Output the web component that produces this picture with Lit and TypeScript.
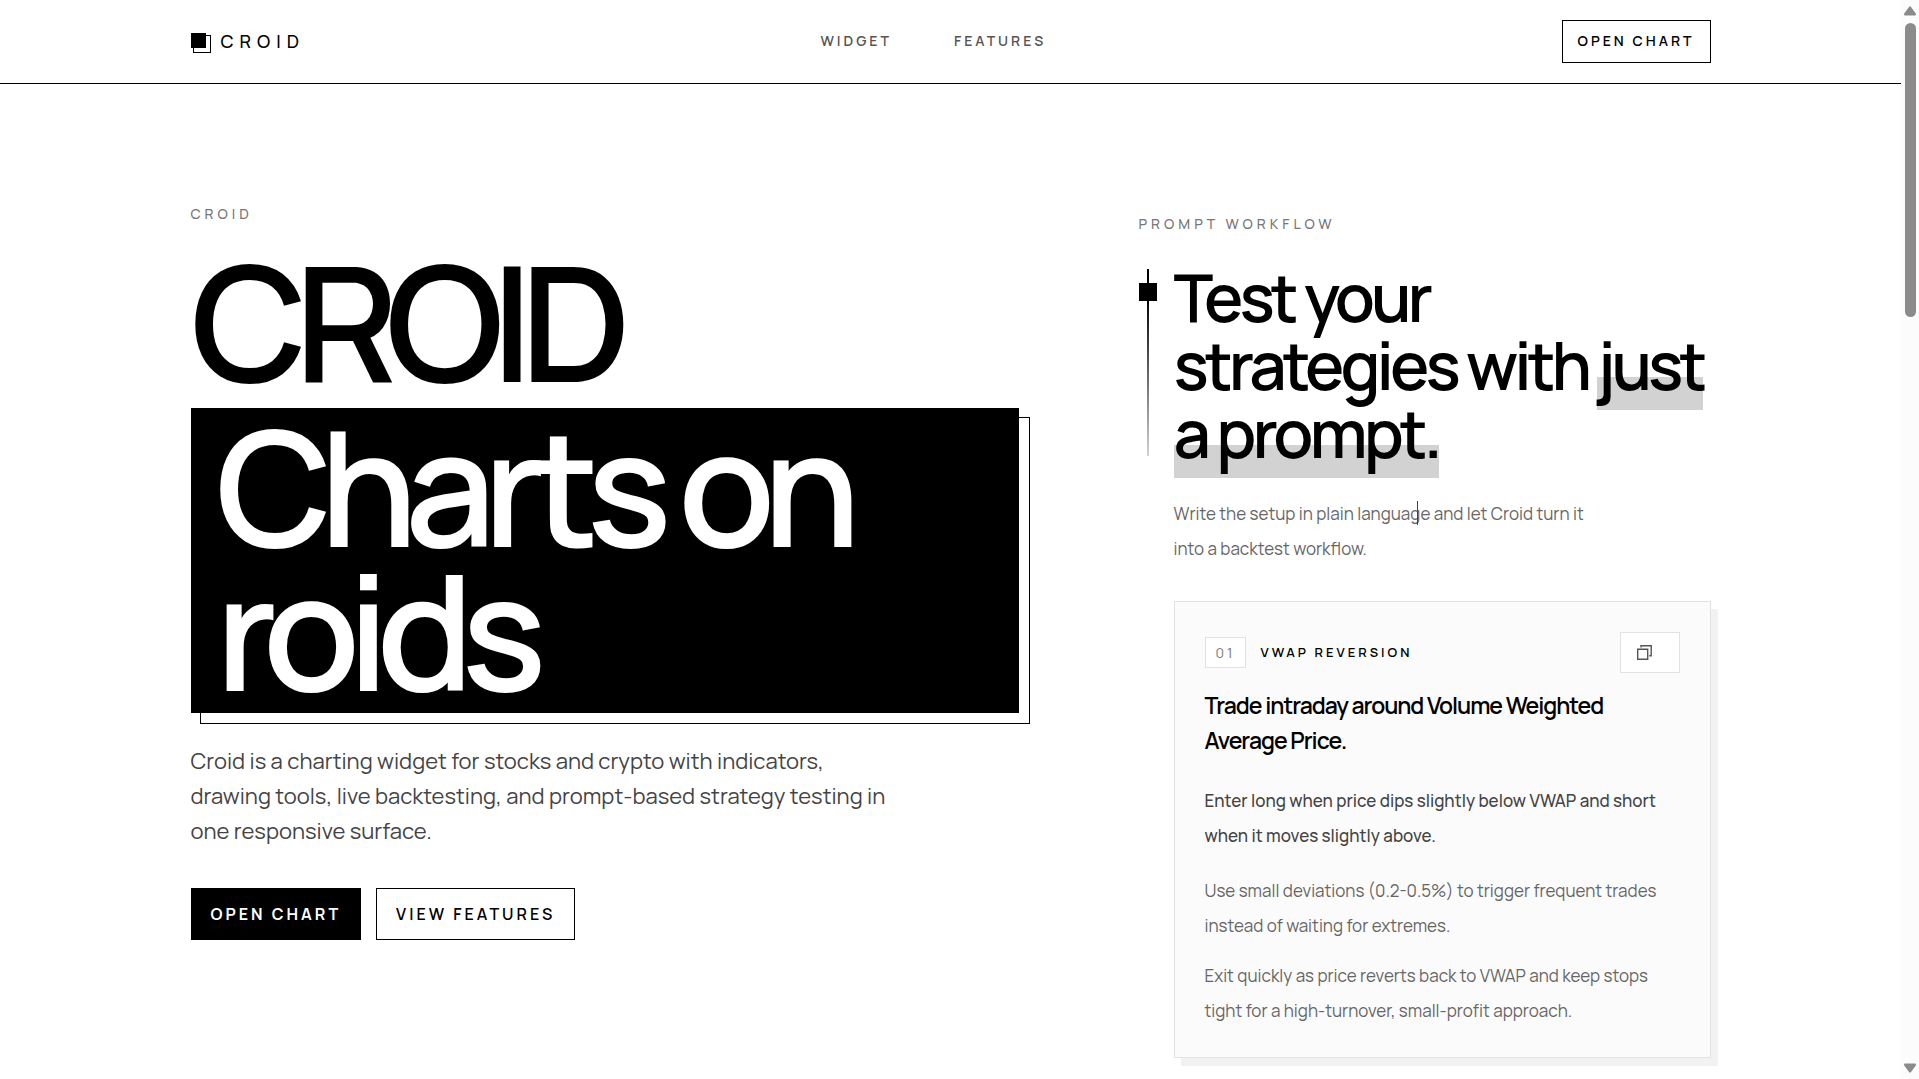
import { LitElement, html, css } from "lit";
import { customElement } from "lit/decorators.js";

@customElement("croid-header")
class CroidHeader extends LitElement {
  static styles = css`
    :host { display: block; border-bottom: 1px solid #000; }
    .inner {
      box-sizing: border-box;
      max-width: 1520px;
      height: 83px;
      margin: 0 auto;
      display: flex;
      justify-content: space-between;
      align-items: center;
    }
    a { color: inherit; text-decoration: none; }
    .brand {
      display: flex;
      align-items: center;
      gap: 9px;
      padding-bottom: 2px;
      font-size: 18px;
      line-height: 24px;
      font-weight: 500;
      letter-spacing: 6px;
    }
    .mark { display: block; width: 21px; height: 21px; margin-top: 6px; }
    nav {
      display: flex;
      gap: 62px;
      padding-bottom: 2px;
      font-size: 14px;
      line-height: 20px;
      font-weight: 600;
      letter-spacing: 3px;
      color: #555;
    }
    .open {
      box-sizing: border-box;
      height: 43px;
      padding: 0 15px 2px 15px;
      border: 1px solid #000;
      display: flex;
      align-items: center;
      font-size: 14px;
      line-height: 20px;
      font-weight: 600;
      letter-spacing: 3px;
    }
  `;
  render() {
    return html`
      <div class="inner">
        <a class="brand" href="#">
          <svg class="mark" viewBox="0 0 21 21" aria-hidden="true">
            <rect x="2.5" y="2.5" width="17" height="17" fill="none" stroke="#000" />
            <rect width="15" height="15" fill="#000" />
          </svg>
          <span>CROID</span>
        </a>
        <nav>
          <a href="#widget">WIDGET</a>
          <a href="#features">FEATURES</a>
        </nav>
        <a class="open" href="#chart">OPEN CHART</a>
      </div>
    `;
  }
}

@customElement("croid-hero")
class CroidHero extends LitElement {
  static styles = css`
    :host { display: block; }
    .eyebrow {
      margin: 0;
      font-size: 14px;
      line-height: 20px;
      font-weight: 500;
      letter-spacing: 4px;
      color: #777;
    }
    h1 {
      margin: 25px 0 0;
      font-size: 160px;
      line-height: 144px;
      font-weight: 600;
      letter-spacing: -13px;
    }
    .name { display: block; }
    .slab {
      position: relative;
      display: block;
      margin-top: 15px;
      padding: 6px 25px 11px;
      background: #000;
      color: #fff;
    }
    .slab::after {
      content: "";
      position: absolute;
      inset: 9px -11px -11px 9px;
      border: 1px solid #000;
      z-index: -1;
    }
    .lead {
      max-width: 710px;
      margin: 31px 0 0;
      font-size: 22px;
      line-height: 35px;
      font-weight: 400;
      color: #444;
    }
    .actions { display: flex; gap: 15px; margin-top: 39px; }
    .actions a {
      box-sizing: border-box;
      height: 52px;
      padding: 0 19px;
      border: 1px solid #000;
      display: flex;
      align-items: center;
      font-size: 16px;
      font-weight: 600;
      letter-spacing: 3px;
      color: #000;
      text-decoration: none;
    }
    .actions .primary { background: #000; color: #fff; font-weight: 700; }
  `;
  render() {
    return html`
      <p class="eyebrow">CROID</p>
      <h1><span class="name">CROID</span><span class="slab">Charts on roids</span></h1>
      <p class="lead">
        Croid is a charting widget for stocks and crypto with indicators, drawing tools, live
        backtesting, and prompt-based strategy testing in one responsive surface.
      </p>
      <div class="actions">
        <a class="primary" href="#chart">OPEN CHART</a>
        <a href="#features">VIEW FEATURES</a>
      </div>
    `;
  }
}

@customElement("croid-workflow")
class CroidWorkflow extends LitElement {
  static styles = css`
    :host { display: block; }
    .eyebrow {
      margin: 0;
      font-size: 14px;
      line-height: 20px;
      font-weight: 500;
      letter-spacing: 4px;
      color: #777;
    }
    .body { display: grid; grid-template-columns: 18px minmax(0, 1fr); column-gap: 17px; margin-top: 35px; }
    .rail { display: block; width: 18px; height: 187px; }
    h2 {
      margin: -6px 0 0;
      font-size: 66px;
      line-height: 68px;
      font-weight: 600;
      letter-spacing: -4px;
    }
    mark {
      color: inherit;
      background: linear-gradient(transparent 63%, #d2d2d2 63%);
      box-decoration-break: clone;
      -webkit-box-decoration-break: clone;
    }
    .intro {
      position: relative;
      max-width: 430px;
      margin: 29px 0 0;
      font-size: 17px;
      line-height: 35px;
      color: #666;
    }
    .caret { position: absolute; left: 243px; top: 5px; width: 1px; height: 24px; background: #444; }
    .card {
      margin-top: 35px;
      padding: 30px 30px 29px;
      border: 1px solid #e2e2e2;
      background: #fbfbfb;
      box-shadow: 7px 8px 0 #f2f2f2;
    }
    .head { display: flex; align-items: center; }
    .num {
      box-sizing: border-box;
      height: 31px;
      padding: 0 9px 0 10px;
      border: 1px solid #e2e2e2;
      background: #fff;
      display: flex;
      align-items: center;
      font-size: 14px;
      letter-spacing: 3px;
      color: #777;
    }
    .tag { margin-left: 15px; padding-bottom: 2px; font-size: 13px; font-weight: 600; letter-spacing: 3px; }
    button {
      box-sizing: border-box;
      width: 60px;
      height: 41px;
      margin-left: auto;
      padding: 0 0 0 16px;
      border: 1px solid #e2e2e2;
      background: #fff;
      color: #555;
      display: flex;
      align-items: center;
    }
    h3 {
      margin: 15px 0 0;
      font-size: 23px;
      line-height: 35px;
      font-weight: 600;
      letter-spacing: -1px;
    }
    .rule { margin: 25px 0 0; font-size: 17px; line-height: 35px; font-weight: 500; color: #444; }
    .note { margin: 20px 0 0; font-size: 17px; line-height: 35px; color: #666; }
    .note + .note { margin-top: 15px; }
  `;
  render() {
    return html`
      <p class="eyebrow">PROMPT WORKFLOW</p>
      <div class="body">
        <svg class="rail" viewBox="0 0 18 187" aria-hidden="true">
          <defs>
            <linearGradient id="fade" x1="0" y1="0" x2="0" y2="1">
              <stop offset="0.15" stop-color="#000" />
              <stop offset="1" stop-color="#d2d2d2" />
            </linearGradient>
          </defs>
          <rect x="8" width="2" height="187" fill="url(#fade)" />
          <rect y="14" width="18" height="18" />
        </svg>
        <div>
          <h2>Test your strategies with <mark>just a prompt.</mark></h2>
          <p class="intro">
            Write the setup in plain language and let Croid turn it into a backtest workflow.
            <span class="caret"></span>
          </p>
          <article class="card">
            <div class="head">
              <span class="num">01</span>
              <span class="tag">VWAP REVERSION</span>
              <button type="button" aria-label="Copy">
                <svg width="15" height="15" viewBox="0 0 15 15" fill="none" stroke="currentColor" stroke-width="1.4" aria-hidden="true">
                  <path d="M0.7 4.2h10v10h-10z" />
                  <path d="M4 2.6V0.7h10.2v10h-2" />
                </svg>
              </button>
            </div>
            <h3>Trade intraday around Volume Weighted Average Price.</h3>
            <p class="rule">Enter long when price dips slightly below VWAP and short when it moves slightly above.</p>
            <p class="note">Use small deviations (0.2-0.5%) to trigger frequent trades instead of waiting for extremes.</p>
            <p class="note">Exit quickly as price reverts back to VWAP and keep stops tight for a high-turnover, small-profit approach.</p>
          </article>
        </div>
      </div>
    `;
  }
}

@customElement("app-root")
class AppRoot extends LitElement {
  static styles = css`
    :host {
      display: grid;
      grid-template-columns: minmax(0, 1fr) 18px;
      height: 100vh;
      overflow: hidden;
      background: #fff;
      color: #000;
      font-family: Manrope, Inter, "Liberation Sans", sans-serif;
    }
    .page { min-width: 0; overflow: hidden; }
    main {
      position: relative;
      z-index: 0;
      max-width: 1520px;
      margin: 0 auto;
      padding-top: 120px;
      display: grid;
      grid-template-columns: minmax(0, 828fr) minmax(0, 572fr);
      column-gap: 120px;
      align-items: start;
    }
    croid-workflow { margin-top: 10px; }
    .scroll {
      background: #fcfcfc;
      display: flex;
      flex-direction: column;
      align-items: center;
      color: #8b8b8b;
    }
    .scroll svg { display: block; margin: 5px 0; }
    .track { flex: 1; width: 11px; padding-top: 2px; }
    .thumb { height: 28.4%; border-radius: 6px; background: currentColor; }
  `;
  render() {
    return html`
      <div class="page">
        <croid-header></croid-header>
        <main>
          <croid-hero></croid-hero>
          <croid-workflow></croid-workflow>
        </main>
      </div>
      <div class="scroll" aria-hidden="true">
        <svg width="12" height="11" viewBox="0 0 12 11"><path d="M5 2Q6 0.6 7 2L11.8 8.6Q12.4 10.5 11 10.5H1Q-0.4 10.5 0.2 8.6Z" fill="currentColor" /></svg>
        <div class="track"><div class="thumb"></div></div>
        <svg width="12" height="11" viewBox="0 0 12 11"><path d="M5 9Q6 10.4 7 9L11.8 2.4Q12.4 0.5 11 0.5H1Q-0.4 0.5 0.2 2.4Z" fill="currentColor" /></svg>
      </div>
    `;
  }
}
